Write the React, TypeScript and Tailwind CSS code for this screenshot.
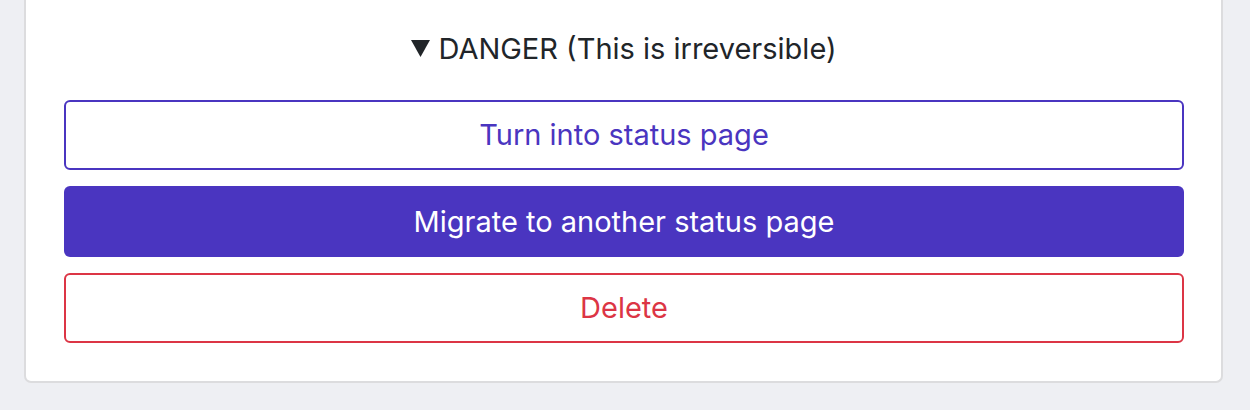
import React from 'react';

const DangerZone: React.FC = () => {
  return (
    <div className="w-[1199px] bg-white border-x-2 border-b-2 border-[#dcdcde] rounded-b-[7px] pl-[38px] pr-[37px] pt-[31px] pb-[38px]">
      {/* summary line */}
      <div className="h-[35px] flex items-center justify-center text-[29px] text-[#212529]">
        <svg width="19" height="17" viewBox="0 0 19 17" className="mr-[8px]">
          <path d="M0 0 H19 L9.5 17 Z" fill="#212529" />
        </svg>
        <span>DANGER (This is irreversible)</span>
      </div>

      <div className="mt-[34px] flex flex-col gap-[16px]">
        <button className="h-[70px] w-full rounded-[6px] border-2 border-[#4a35c0] bg-white text-[29px] text-[#4a35c0]">
          Turn into status page
        </button>
        <button className="h-[71px] w-full rounded-[6px] bg-[#4a35c0] text-[29px] text-white">
          Migrate to another status page
        </button>
        <button className="h-[70px] w-full rounded-[6px] border-2 border-[#dc3545] bg-white text-[29px] text-[#dc3545]">
          Delete
        </button>
      </div>
    </div>
  );
};

export default function App() {
  return (
    <div
      className="w-[1250px] h-[410px] bg-[#eeeff3] pl-[24px] overflow-hidden"
      style={{ fontFamily: 'Inter, "Liberation Sans", sans-serif' }}
    >
      <DangerZone />
    </div>
  );
}
